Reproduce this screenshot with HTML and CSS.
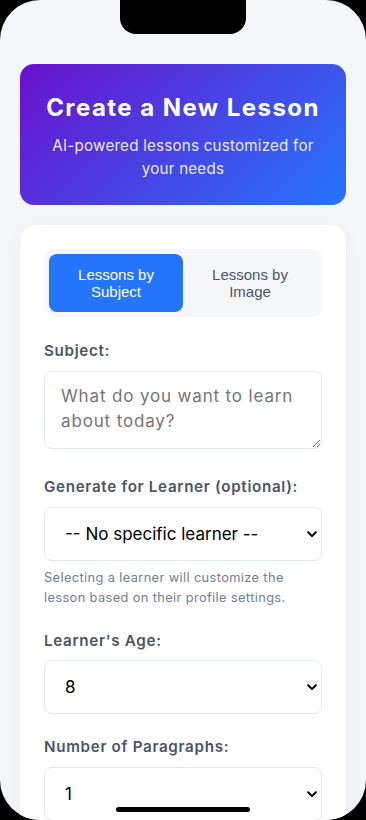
FILE: index.html
```html
<!DOCTYPE html>
<html lang="en">
<head>
<meta charset="utf-8">
<title>Create a New Lesson</title>
<link rel="stylesheet" href="styles.css">
</head>
<body>
<div class="screen">
  <div class="content">
    <header class="hero">
      <h1 class="hero-title">Create a New Lesson</h1>
      <p class="hero-sub">AI-powered lessons customized for your needs</p>
    </header>
    <main class="card">
      <div class="tabs">
        <button class="tab tab-active">Lessons by Subject</button>
        <button class="tab">Lessons by Image</button>
      </div>
      <div class="group group-text">
        <label class="label" for="subject">Subject:</label>
        <textarea id="subject" class="textarea" placeholder="What do you want to learn about today?"></textarea>
      </div>
      <div class="group">
        <label class="label" for="learner">Generate for Learner (optional):</label>
        <div class="select-wrap">
          <select id="learner" class="select"><option>-- No specific learner --</option></select>
          <svg class="chev" width="10" height="7" viewBox="0 0 10 7"><path d="M1.2 1.3 5 5.1 8.8 1.3" fill="none" stroke="#000" stroke-width="2" stroke-linecap="round" stroke-linejoin="round"/></svg>
        </div>
        <p class="help">Selecting a learner will customize the lesson based on their profile settings.</p>
      </div>
      <div class="group">
        <label class="label" for="age">Learner's Age:</label>
        <div class="select-wrap">
          <select id="age" class="select"><option>8</option></select>
          <svg class="chev" width="10" height="7" viewBox="0 0 10 7"><path d="M1.2 1.3 5 5.1 8.8 1.3" fill="none" stroke="#000" stroke-width="2" stroke-linecap="round" stroke-linejoin="round"/></svg>
        </div>
      </div>
      <div class="group">
        <label class="label" for="paras">Number of Paragraphs:</label>
        <div class="select-wrap">
          <select id="paras" class="select"><option>1</option></select>
          <svg class="chev" width="10" height="7" viewBox="0 0 10 7"><path d="M1.2 1.3 5 5.1 8.8 1.3" fill="none" stroke="#000" stroke-width="2" stroke-linecap="round" stroke-linejoin="round"/></svg>
        </div>
      </div>
    </main>
  </div>
  <div class="notch"></div>
  <div class="home-bar"></div>
</div>
</body>
</html>
```

FILE: styles.css
```css
* { box-sizing: border-box; }
html, body { margin: 0; padding: 0; background: #000; }
body { font-family: Inter, "Noto Sans", sans-serif; }

.screen {
  position: relative;
  width: 366px;
  height: 820px;
  border-radius: 40px;
  overflow: hidden;
  background: #f5f6fa;
}

.notch {
  position: absolute;
  left: 120px;
  top: 0;
  width: 126px;
  height: 34px;
  background: #000;
  border-radius: 0 0 16px 16px;
}

.home-bar {
  position: absolute;
  left: 116px;
  bottom: 8px;
  width: 134px;
  height: 5px;
  border-radius: 3px;
  background: #000;
}

.content {
  padding: 64px 20px 0;
}

.hero {
  height: 141px;
  border-radius: 14px;
  background: linear-gradient(135deg, #6a11cb 0%, #2575fc 100%);
  color: #fff;
  text-align: center;
  padding: 28px 20px 0;
}

.hero-title {
  margin: 0 0 11px;
  font-size: 24px;
  line-height: 32px;
  font-weight: 700;
  letter-spacing: 0.06em;
}

.hero-sub {
  margin: 0 auto;
  max-width: 280px;
  font-size: 15.2px;
  line-height: 22.8px;
  color: rgba(255, 255, 255, 0.9);
  letter-spacing: 0.2px;
}

.card {
  margin-top: 20px;
  background: #fff;
  border-radius: 16px;
  padding: 24px;
  box-shadow: 0 4px 18px rgba(0, 0, 0, 0.05);
  min-height: 700px;
}

.tabs {
  display: flex;
  background: #f5f7fb;
  border-radius: 10px;
  padding: 5px;
  margin-bottom: 23px;
}

.tab {
  flex: 1;
  border: none;
  background: transparent;
  font-family: "Liberation Sans", Arial, sans-serif;
  font-size: 15px;
  line-height: 17px;
  color: #4a5568;
  padding: 12px 10px;
  border-radius: 8px;
}

.tab-active {
  background: #2575fc;
  color: #fff;
}

.group { margin-bottom: 22px; }
.group-text { margin-bottom: 27px; }

.label {
  display: block;
  font-size: 15.2px;
  line-height: 22.8px;
  font-weight: 600;
  color: #4a5568;
  margin-bottom: 8px;
  letter-spacing: 0.045em;
}

.textarea {
  display: block;
  width: 100%;
  height: 78px;
  border: 1px solid #e2e8f0;
  border-radius: 8px;
  padding: 12px 16px;
  font-family: Inter, "Noto Sans", sans-serif;
  font-size: 17px;
  line-height: 25px;
  color: #2d3748;
  letter-spacing: 0.05em;
  resize: vertical;
}

.textarea::placeholder { color: #757575; }

.select-wrap { position: relative; }

.select {
  display: block;
  width: 100%;
  height: 54px;
  appearance: none;
  -webkit-appearance: none;
  background: #fff;
  border: 1px solid #e2e8f0;
  border-radius: 8px;
  padding: 0 30px 0 20px;
  font-family: Inter, "Noto Sans", sans-serif;
  font-size: 17px;
  color: #000;
  letter-spacing: 0;
}

.chev {
  position: absolute;
  right: 5px;
  top: 24px;
}

.help {
  margin: 7px 0 0;
  font-size: 12.8px;
  line-height: 20px;
  color: #718096;
  letter-spacing: 0.03em;
}
```
